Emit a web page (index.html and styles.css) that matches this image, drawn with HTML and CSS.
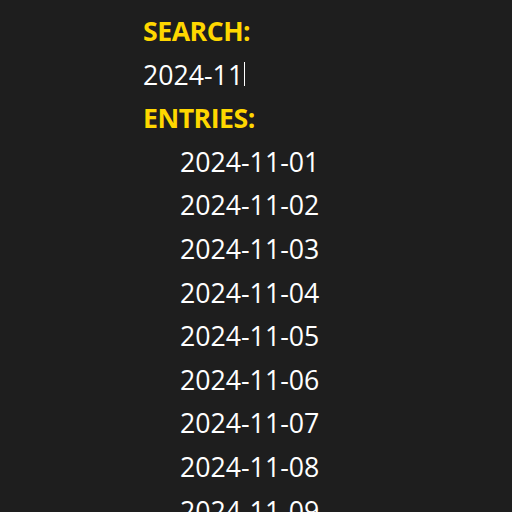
FILE: index.html
```html
<!DOCTYPE html>
<html>
<head>
<meta charset="utf-8">
<link rel="stylesheet" href="styles.css">
</head>
<body>
<div class="panel">
  <div class="label">SEARCH:</div>
  <div class="query">2024-11<span class="caret"></span></div>
  <div class="label">ENTRIES:</div>
  <ul class="entries">
    <li>2024-11-01</li>
    <li>2024-11-02</li>
    <li>2024-11-03</li>
    <li>2024-11-04</li>
    <li>2024-11-05</li>
    <li>2024-11-06</li>
    <li>2024-11-07</li>
    <li>2024-11-08</li>
    <li>2024-11-09</li>
  </ul>
</div>
</body>
</html>
```
FILE: styles.css
```css
html, body {
  margin: 0;
  padding: 0;
  height: 100%;
  background: #1e1e1e;
  overflow: hidden;
}
.panel {
  padding: 9px 0 0 143px;
  font-family: "Open Sans", "Noto Sans", sans-serif;
  font-size: 26.7px;
  line-height: 43.6px;
  color: #ffffff;
}
.label {
  color: #ffd700;
  font-weight: 700;
  letter-spacing: -0.5px;
}
.query {
  display: flex;
  align-items: center;
}
.caret {
  display: inline-block;
  width: 0;
  height: 24px;
  border-left: 1.5px solid #ffffff;
  margin-left: 1px;
}
.entries {
  list-style: none;
  margin: 0;
  padding: 0 0 0 37px;
}
```
